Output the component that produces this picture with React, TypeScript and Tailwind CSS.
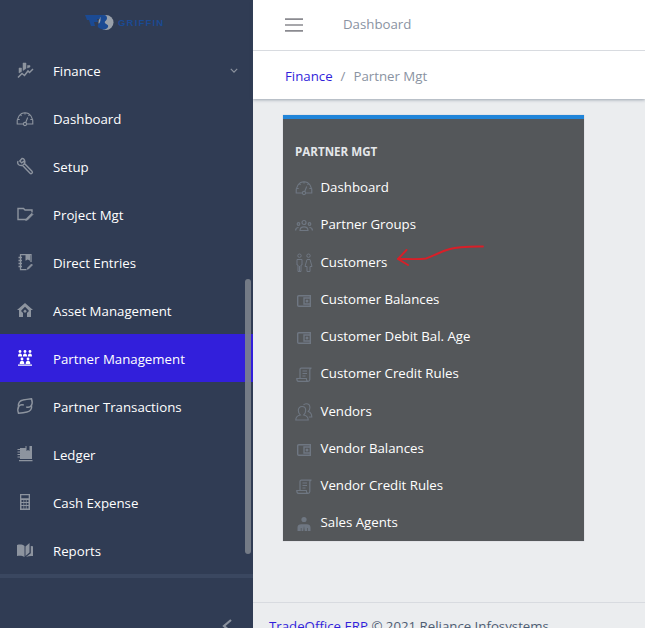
import type { ReactNode } from "react";

const sideIcon = "w-[18px] h-[18px] text-[#8d949f] overflow-visible";
const cardIcon = "w-[18px] h-[18px] text-[#6f7782] overflow-visible";

function FinanceIcon({ className }: { className: string }) {
  return (
    <svg viewBox="0 0 18 18" className={className} fill="none" stroke="currentColor">
      <path d="M3 12V7h2.500v3.500zM7 9.500V2h3v5.500zM11.500 7V4.500H14V6z" fill="currentColor" strokeWidth="0.500" />
      <path d="M2 16.500l4-4 2.500 2 3.500-4.500 1.500 1.500 3.500-3.500" strokeWidth="1.500" />
    </svg>
  );
}

function GaugeIcon({ className }: { className: string }) {
  return (
    <svg viewBox="0 0 18 18" className={className} fill="none" stroke="currentColor" strokeWidth="1.100">
      <path d="M7 15H1.200C.6 8.500 4 3.800 9 3.800s8.400 4.700 7.800 11.200H11" />
      <circle cx="9" cy="15" r="1.600" />
      <path d="M9.700 13.500l2-5M9 3.800v1.700M4.500 5.700l1 1.100M2 10.500h1.700M13.500 5.700l-1 1.100M16 10.500h-1.700" />
    </svg>
  );
}

function WrenchIcon({ className }: { className: string }) {
  return (
    <svg viewBox="0 0 18 18" className={className} fill="none" stroke="currentColor" strokeWidth="1.400">
      <path d="M6 1.500L3.800 4l1.900 1.900L8.300 4c.6 2-.2 3.700-1.900 4.300l7.900 8.200c.9.800 2.800-.9 1.900-1.900L8.500 6.600C9.500 4 8.300 1.200 6 1.500zM2 4c-1.200 2.500.6 5 4 4.500" />
    </svg>
  );
}

function FolderEditIcon({ className }: { className: string }) {
  return (
    <svg viewBox="0 0 18 18" className={className} fill="none" stroke="currentColor" strokeWidth="1.400">
      <path d="M10 14.500H2v-11h5.500L9 5h7v2.500" />
      <path d="M11.500 15l5.500-5.500-1.300-1.300-5.500 5.500-.5 1.800z" fill="currentColor" strokeWidth="0.700" />
    </svg>
  );
}

function NotebookIcon({ className }: { className: string }) {
  return (
    <svg viewBox="0 0 18 18" className={className} fill="none" stroke="currentColor" strokeWidth="1.300">
      <path d="M15 9V1.700H4.500v15h6" />
      <path d="M2.500 4.500h3.500M2.500 7.500h3.500M2.500 10.500h3.500M2.500 13.500h3.500" />
      <path d="M9.500 1.700h4.500v6l-2.200-1.200-2.300 1.200z" fill="currentColor" stroke="none" />
      <path d="M11.500 15l4-4 1 1-4 4-1.300.3z" fill="currentColor" strokeWidth="0.700" />
    </svg>
  );
}

function HouseIcon({ className }: { className: string }) {
  return (
    <svg viewBox="0 0 18 18" className={className} fill="currentColor">
      <path d="M9 2l8 7h-2v7h-4v-4l2-2-1-1.200-3-3-3 3L5 10l2 2v4H3V9H1z" />
      <path d="M9 8.500l1.800 1.800L9 12l-1.800-1.700z" />
    </svg>
  );
}

function TeamIcon({ className }: { className: string }) {
  return (
    <svg viewBox="0 0 18 18" className={className} fill="currentColor">
      <circle cx="4" cy="2.500" r="1.400" />
      <circle cx="9" cy="2.500" r="1.400" />
      <circle cx="14" cy="2.500" r="1.400" />
      <path d="M2 7.500c0-2 .6-3 2-3s2.200 1 2.200 3zM6.900 7.500c0-2 .7-3 2.100-3s2.100 1 2.100 3zM11.800 7.500c0-2 .8-3 2.200-3s2 1 2 3z" />
      <circle cx="6" cy="10" r="1.400" />
      <circle cx="12" cy="10" r="1.400" />
      <path d="M3.700 15c0-2 .8-3.200 2.300-3.200s2.300 1.200 2.300 3.200zM9.700 15c0-2 .8-3.200 2.300-3.200s2.300 1.200 2.300 3.200zM2 15.500h14v1.200H2z" />
    </svg>
  );
}

function HandshakeIcon({ className }: { className: string }) {
  return (
    <svg viewBox="0 0 18 18" className={className} fill="none" stroke="currentColor" strokeWidth="1.500">
      <path d="M2.500 9.500C1.800 6 4 3.500 7 3c3-.6 6-1 8.500-1.300.8 2.300 1 5-.3 7-1 1.500-3 1.800-5 1.300" />
      <path d="M15.500 8.500c.7 3.500-1.500 6-4.500 6.500-3 .6-6 1-8.500 1.300-.8-2.300-1-5 .3-7 1-1.500 3-1.800 5-1.300" />
    </svg>
  );
}

function LedgerIcon({ className }: { className: string }) {
  return (
    <svg viewBox="0 0 18 18" className={className} fill="currentColor">
      <path d="M4 3h5.500V1h6.500v13H4z" />
      <path d="M10.500 1h3v5l-1.500-1-1.500 1z" fill="#303c54" />
      <path d="M1.500 4h3.500v1H1.500zM1.500 6.500h3.500v1H1.500zM1.500 9h3.500v1H1.500zM1.500 11.500h3.500v1H1.500zM3 15h13.500v1.300H3z" />
    </svg>
  );
}

function CalculatorIcon({ className }: { className: string }) {
  return (
    <svg viewBox="0 0 18 18" className={className} fill="currentColor">
      <path fillRule="evenodd" d="M4 1h10v16H4zM5.300 2.300v3h7.400v-3zM5.500 7v2h2V7zm2.700 0v2h1.600V7zm2.400 0v2h1.900V7zm-5.100 3v2h2v-2zm2.700 0v2h1.600v-2zm2.400 0v2h1.900v-2zm-5.100 3v2.500h2V13zm2.700 0v2.500h1.600V13zm2.400 0v2.500h1.900V13z" />
    </svg>
  );
}

function BookIcon({ className }: { className: string }) {
  return (
    <svg viewBox="0 0 18 18" className={className} fill="currentColor">
      <path d="M1 4c3-.8 5.500-.5 7.500 1v11c-2-1.300-4.500-1.500-7.500-1z" />
      <path d="M9.500 5.500L13.500 2v9.500l-4 3.500z" />
      <path d="M14.800 5l2.200.2V15c-2.500-.3-4.800 0-7 1l4.800-3.800z" />
    </svg>
  );
}

function PeopleIcon({ className }: { className: string }) {
  return (
    <svg viewBox="0 0 18 18" className={className} fill="none" stroke="currentColor" strokeWidth="1.200">
      <circle cx="9" cy="7.500" r="2" />
      <circle cx="3.500" cy="9" r="1.300" />
      <circle cx="14.500" cy="9" r="1.300" />
      <path d="M5 15.500c0-2.500 1.500-3.700 4-3.700s4 1.200 4 3.700zM.6 15.500c0-2 1-3 3-3M17.400 15.500c0-2-1-3-3-3" />
    </svg>
  );
}

function CoupleIcon({ className }: { className: string }) {
  return (
    <svg viewBox="0 0 18 18" className={className} fill="none" stroke="currentColor" strokeWidth="1">
      <circle cx="4.500" cy="2.700" r="1.700" />
      <circle cx="13.500" cy="2.700" r="1.700" />
      <path d="M2 6.500h5v5.500H6v6.500H3V12H2zM4.500 13v5.500" />
      <path d="M12 6.500h3l2 7h-2v5h-3v-5h-2z" />
    </svg>
  );
}

function WalletIcon({ className }: { className: string }) {
  return (
    <svg viewBox="0 0 18 18" className={className} fill="none" stroke="currentColor" strokeWidth="1.400">
      <path d="M15.300 8V5.700H3.800c-.8 0-1.100.4-1.100 1.100v8.400c0 .7.3 1.100 1.100 1.100h11.500v-2.300" />
      <path d="M9 8h6.300v6H9z" />
      <circle cx="12" cy="11" r="0.800" fill="currentColor" />
    </svg>
  );
}

function ScrollIcon({ className }: { className: string }) {
  return (
    <svg viewBox="0 0 18 18" className={className} fill="none" stroke="currentColor" strokeWidth="1.200">
      <path d="M5 14.500V5.500c0-.8.5-1.300 1.300-1.300h10.200c-1.200 0-1.700.6-1.700 1.700v9.600c0 1-.7 1.800-1.800 1.800H3.500c-1.200 0-1.700-1-1.700-2.800h9.500c0 1.500.4 2.400 1.500 2.800" />
      <path d="M7.500 7h4.500M7.500 9.500h4.500M7.500 12h3" />
    </svg>
  );
}

function VendorsIcon({ className }: { className: string }) {
  return (
    <svg viewBox="0 0 18 18" className={className} fill="none" stroke="currentColor" strokeWidth="1.100">
      <path d="M.8 18c0-3.200 1.200-4.300 4.500-5-1.300-1.300-2-3-2-4.700C3.300 6 4.700 4.500 7 4.500s3.700 1.500 3.700 3.800c0 1.700-.7 3.400-2 4.700 3.300.7 4.500 1.800 4.500 5z" />
      <path d="M8.500 3c.6-.8 1.600-1.300 2.700-1.300 2.300 0 3.700 1.500 3.700 3.700 0 1.600-.6 3-1.600 4 2.400.8 3.500 2.200 3.500 5.600h-3" />
    </svg>
  );
}

function AgentIcon({ className }: { className: string }) {
  return (
    <svg viewBox="0 0 18 18" className={className} fill="currentColor">
      <circle cx="9" cy="6.500" r="2.600" />
      <path d="M2.500 18v-3.500c0-2 1.500-3.200 3.700-3.200h5.600c2.200 0 3.700 1.200 3.700 3.200V18h-2.800v-3h-.7v3H9.700L9 13l-.7 5H6.500v-3h-.7v3z" />
    </svg>
  );
}

const sideItems: { label: string; icon: (c: string) => ReactNode; active?: boolean; caret?: boolean }[] = [
  { label: "Finance", icon: (c) => <FinanceIcon className={c} />, caret: true },
  { label: "Dashboard", icon: (c) => <GaugeIcon className={c} /> },
  { label: "Setup", icon: (c) => <WrenchIcon className={c} /> },
  { label: "Project Mgt", icon: (c) => <FolderEditIcon className={c} /> },
  { label: "Direct Entries", icon: (c) => <NotebookIcon className={c} /> },
  { label: "Asset Management", icon: (c) => <HouseIcon className={c} /> },
  { label: "Partner Management", icon: (c) => <TeamIcon className={c} />, active: true },
  { label: "Partner Transactions", icon: (c) => <HandshakeIcon className={c} /> },
  { label: "Ledger", icon: (c) => <LedgerIcon className={c} /> },
  { label: "Cash Expense", icon: (c) => <CalculatorIcon className={c} /> },
  { label: "Reports", icon: (c) => <BookIcon className={c} /> },
];

const cardItems: { label: string; icon: (c: string) => ReactNode }[] = [
  { label: "Dashboard", icon: (c) => <GaugeIcon className={c} /> },
  { label: "Partner Groups", icon: (c) => <PeopleIcon className={c} /> },
  { label: "Customers", icon: (c) => <CoupleIcon className={c} /> },
  { label: "Customer Balances", icon: (c) => <WalletIcon className={c} /> },
  { label: "Customer Debit Bal. Age", icon: (c) => <WalletIcon className={c} /> },
  { label: "Customer Credit Rules", icon: (c) => <ScrollIcon className={c} /> },
  { label: "Vendors", icon: (c) => <VendorsIcon className={c} /> },
  { label: "Vendor Balances", icon: (c) => <WalletIcon className={c} /> },
  { label: "Vendor Credit Rules", icon: (c) => <ScrollIcon className={c} /> },
  { label: "Sales Agents", icon: (c) => <AgentIcon className={c} /> },
];

export default function App() {
  return (
    <div className="flex h-screen overflow-hidden bg-[#ebedef] font-['Open_Sans',sans-serif] text-[13.25px]">
      {/* Sidebar */}
      <aside className="relative flex w-[253px] shrink-0 flex-col bg-[#303c54] text-white">
        <div className="flex h-[46px] shrink-0 items-start justify-start pl-[84px] pt-[13px]">
          <svg viewBox="0 0 84 20" className="h-[20px] w-[84px] overflow-visible">
            <path d="M1 2h18l-2 4h-4l1 3h-4l1 4H7L5 7H3z" fill="#1b4a93" />
            <circle cx="22" cy="9.500" r="7.500" fill="#9aa1ab" />
            <path d="M17 3c3-2 6-1 6 2s-3 3-2 5 4 1 3 4-6 3-9 1 0-4 1-6 0-4 1-6z" fill="#1b4a93" />
            <text x="34" y="13" fill="#1b4a93" fontFamily="'Liberation Sans', sans-serif" fontWeight="700" fontSize="9.500" letterSpacing="1.200">GRIFFIN</text>
          </svg>
        </div>

        <nav className="flex-1 overflow-hidden">
          {sideItems.map((item) => (
            <div
              key={item.label}
              className={`flex h-[48px] items-center pl-[16px] pr-[15px] ${item.active ? "bg-[#321fdb]" : ""}`}
            >
              <span className="mr-[19px] flex w-[18px] justify-center">
                {item.icon(item.active ? "w-[18px] h-[18px] text-white" : sideIcon)}
              </span>
              <span className="flex-1 pt-[4px]">{item.label}</span>
              {item.caret && (
                <svg viewBox="0 0 10 6" className="h-[5px] w-[8px]" fill="none" stroke="#8b929e" strokeWidth="1.500">
                  <path d="M1 1l4 4 4-4" />
                </svg>
              )}
            </div>
          ))}
        </nav>

        {/* Scroll thumb over the nav */}
        <div className="absolute left-[245px] top-[279px] h-[275px] w-[6px] rounded-full bg-[#7c828c]/90" />

        <div className="h-[4px] shrink-0 bg-[#3a4760]" />
        <div className="flex h-[50px] shrink-0 items-end justify-end pr-[20px]">
          <svg viewBox="0 0 12 14" className="h-[14px] w-[12px] translate-y-[5px]" fill="none" stroke="#8b929e" strokeWidth="2.200">
            <path d="M10 1L3 7l7 6" />
          </svg>
        </div>
      </aside>

      {/* Right side */}
      <div className="relative flex min-w-0 flex-1 flex-col">
        <header className="shrink-0 bg-white shadow-[0_1px_3px_rgba(60,75,100,0.45)]">
          <div className="flex h-[51px] items-center border-b border-[#d8dbe0] pl-[32px]">
            <svg viewBox="0 0 18 14" className="h-[14px] w-[18px]" fill="none" stroke="#8a8a90" strokeWidth="1.700">
              <path d="M0 1.200h18M0 7h18M0 12.800h18" />
            </svg>
            <span className="ml-[40px] text-[#8a93a2]">Dashboard</span>
          </div>
          <div className="flex h-[48px] items-center pl-[32px] pt-[3px]">
            <span className="text-[#321fdb]">Finance</span>
            <span className="mx-[8px] text-[#8a93a2]">/</span>
            <span className="text-[#8a93a2]">Partner Mgt</span>
          </div>
        </header>

        <main className="flex-1 overflow-hidden pl-[30px] pt-[16px]">
          <div className="w-[301px] border-t-[4px] border-[#2185d9] bg-[#54575a] text-white shadow-[0_0_1px_rgba(60,75,100,0.3)]">
            <div className="flex h-[49.5px] items-end pb-[8px] pl-[12px] text-[11.6px] font-bold text-[#e4e7ea]">PARTNER MGT</div>
            {cardItems.map((item) => (
              <div key={item.label} className="flex h-[37.25px] items-center pl-[12px]">
                <span className="mr-[7.5px] flex w-[18px] justify-center">{item.icon(cardIcon)}</span>
                <span className="pt-[2px]">{item.label}</span>
              </div>
            ))}
          </div>
        </main>

        <footer className="h-[26px] shrink-0 overflow-hidden border-t border-[#d8dbe0] pl-[16px] pt-[14px] text-[#4f5d73]">
          <span className="text-[#321fdb]">TradeOffice ERP</span> © 2021 Reliance Infosystems
        </footer>

        {/* Red annotation arrow drawn over the Customers row */}
        <svg viewBox="0 0 90 24" className="absolute left-[144px] top-[244px] h-[24px] w-[90px]" fill="none" stroke="#d81f28" strokeWidth="1.900" strokeLinecap="round" strokeLinejoin="round">
          <path d="M86 2.500c-10 .2-24 0-33 2.500-11 3-18 8-24 9.500-6 1-14 .5-28 .5" />
          <path d="M9.500 6L1 15l10 6" />
        </svg>
      </div>
    </div>
  );
}
